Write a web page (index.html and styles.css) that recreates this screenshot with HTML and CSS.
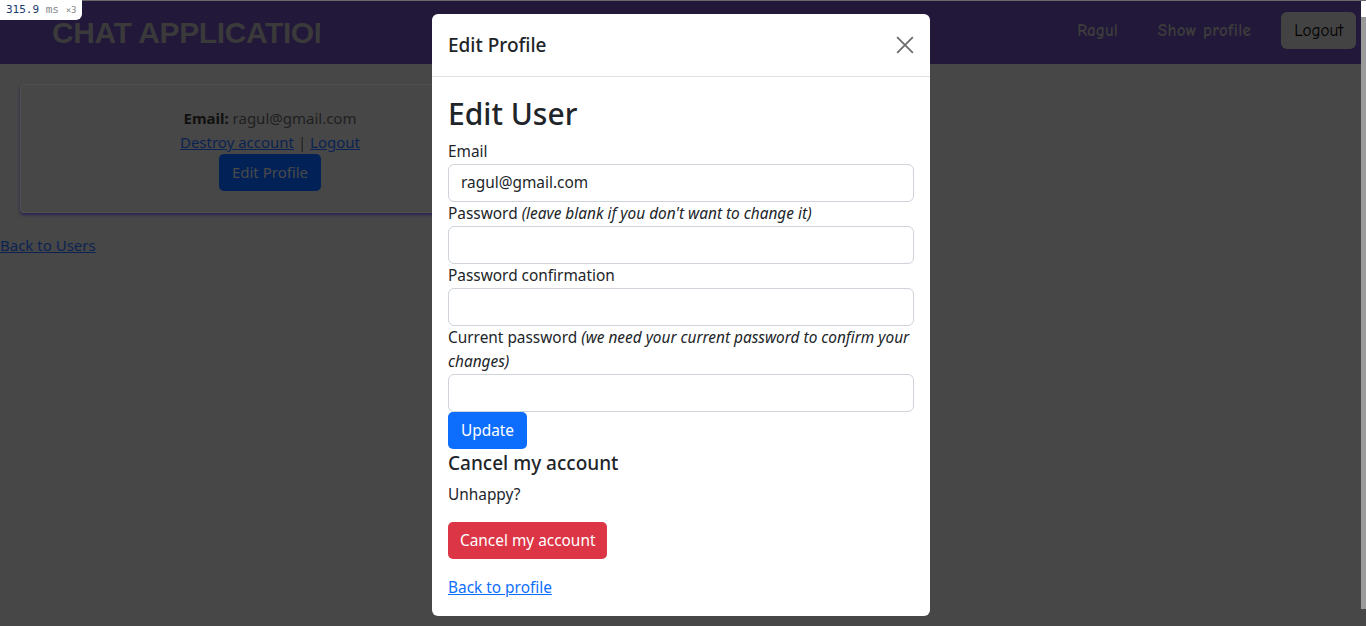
FILE: index.html
```html
<!DOCTYPE html>
<html lang="en">
<head>
<meta charset="utf-8">
<title>Chat Application</title>
<link rel="stylesheet" href="styles.css">
</head>
<body>
<div class="page">
  <header class="navbar">
    <div class="brand">CHAT APPLICATION</div>
    <nav class="nav-right">
      <span class="nav-link name">Ragul</span>
      <span class="nav-link profile">Show profile</span>
      <span class="nav-btn">Logout</span>
    </nav>
  </header>
  <main class="content">
    <div class="card">
      <div><b>Email:</b> ragul@gmail.com</div>
      <div><a href="#">Destroy account</a> | <a href="#">Logout</a></div>
      <span class="card-btn">Edit Profile</span>
    </div>
    <a class="back-users" href="#">Back to Users</a>
  </main>
</div>
<div class="scrollbar"><div class="thumb"></div></div>

<div class="perf"><span class="num">315.9</span> <span class="unit">ms</span> <span class="mult">×3</span></div>

<div class="modal">
  <div class="modal-header">
    <h5>Edit Profile</h5>
    <svg class="close" width="18" height="18" viewBox="0 0 16 16"><path d="M1 1L15 15M15 1L1 15" stroke="#6c6c6c" stroke-width="1.6" fill="none"/></svg>
  </div>
  <div class="modal-body">
    <h1>Edit User</h1>
    <label>Email</label>
    <div class="input">ragul@gmail.com</div>
    <label>Password <i>(leave blank if you don't want to change it)</i></label>
    <div class="input"></div>
    <label>Password confirmation</label>
    <div class="input"></div>
    <label>Current password <i>(we need your current password to confirm your changes)</i></label>
    <div class="input"></div>
    <span class="btn btn-primary">Update</span>
    <h3>Cancel my account</h3>
    <p class="unhappy">Unhappy?</p>
    <span class="btn btn-danger">Cancel my account</span>
    <a class="back-profile" href="#">Back to profile</a>
  </div>
</div>
</body>
</html>
```

FILE: styles.css
```css
html, body { margin: 0; padding: 0; height: 100%; overflow: hidden; }
body {
  display: flex;
  background: #474747;
  font-family: "Noto Sans", "Open Sans", sans-serif;
  font-size: 15px;
  color: #1f1f1f;
  border-top: 1px solid #6a6a6a;
  box-sizing: border-box;
}
.page { flex: 1; min-width: 0; }
.scrollbar {
  width: 5px;
  display: flex;
  flex-direction: column;
  padding-top: 16px;
  background: linear-gradient(#ffffff 0 16px, #474747 16px);
}
.thumb { height: 592px; background: #9a9a9a; }

.navbar {
  height: 63px;
  background: #22183a;
  display: flex;
  align-items: center;
  justify-content: space-between;
}
.brand {
  margin-left: 52px;
  width: 268px;
  overflow: hidden;
  white-space: nowrap;
  font-family: "Liberation Sans", Arial, sans-serif;
  font-weight: bold;
  font-size: 30px;
  color: #3a3a3a;
  letter-spacing: -0.4px;
}
.nav-right { display: flex; align-items: center; margin-right: 5px; }
.nav-link {
  font-family: "Comic Neue", "Comic Sans MS", "DejaVu Sans", sans-serif;
  font-size: 17px;
  font-weight: bold;
  color: #3c3c3c;
  margin-top: -4px;
}
.nav-link.name { margin-right: 40px; }
.nav-link.profile { margin-right: 30px; letter-spacing: 0.3px; }
.nav-btn {
  font-family: "Comic Neue", "Comic Sans MS", "DejaVu Sans", sans-serif;
  font-size: 17px;
  color: #000;
  background: #434343;
  border-radius: 6px;
  padding: 8px 13px;
  height: 37px;
  box-sizing: border-box;
  display: flex;
  align-items: center;
  margin-top: -4px;
}

.content { padding-top: 20px; }
.card {
  margin-left: 20px;
  width: 500px;
  box-sizing: border-box;
  border: 1px solid #505050;
  border-radius: 4px;
  box-shadow: 0 2px 3px #2c2354;
  padding: 21px 0 21px;
  text-align: center;
  line-height: 24px;
  color: #1f1f1f;
}
.card a { color: #0b2352; }
.card b { color: #111; }
.card-btn {
  display: inline-block;
  background: #022257;
  color: #4a4a4a;
  border-radius: 5px;
  padding: 6px 13px;
  line-height: 25px;
}
.back-users {
  display: inline-block;
  margin-top: 20px;
  color: #0b2352;
  line-height: 24px;
}

.perf {
  position: fixed;
  left: 0; top: 0;
  background: #fff;
  width: 82px; height: 20px;
  border-bottom-right-radius: 6px;
  font-family: "DejaVu Sans Mono", monospace;
  font-size: 11px;
  line-height: 20px;
  padding-left: 6px;
  box-sizing: border-box;
  color: #333;
  white-space: nowrap;
}
.perf .num { color: #1a3a6a; }
.perf .unit { color: #888; }
.perf .mult { color: #888; font-size: 9px; }

.modal {
  position: fixed;
  left: 432px; top: 14px;
  width: 498px;
  background: #fff;
  border-radius: 6px;
  color: #212529;
}
.modal-header {
  height: 62px;
  border-bottom: 1px solid #dee2e6;
  display: flex;
  align-items: center;
  justify-content: space-between;
  padding: 0 16px;
}
.modal-header h5 { margin: 0; font-size: 19px; font-weight: 500; }
.modal-body { padding: 18px 16px 16px; display: flex; flex-direction: column; align-items: flex-start; }
.modal-body h1 { margin: 0 0 8px; font-size: 30px; font-weight: 500; line-height: 37px; }
.modal-body label { font-size: 15.4px; line-height: 24px; color: #212529; }
.input {
  align-self: stretch;
  height: 38px;
  box-sizing: border-box;
  border: 1px solid #ced4da;
  border-radius: 6px;
  padding: 0 12px;
  font-size: 15.4px;
  line-height: 36px;
}
.btn {
  display: inline-block;
  color: #fff;
  border-radius: 5px;
  font-size: 15.4px;
  line-height: 37px;
  padding: 0 13px;
}
.btn-primary { background: #0d6efd; }
.btn-danger { background: #dc3545; padding: 0 12px; }
.modal-body h3 { margin: 2px 0 0; font-size: 19px; font-weight: 500; line-height: 24px; }
.unhappy { margin: 8px 0 15px; font-size: 15.4px; line-height: 24px; }
.back-profile { margin-top: 17px; color: #0d6efd; font-size: 15.4px; line-height: 24px; }
```
